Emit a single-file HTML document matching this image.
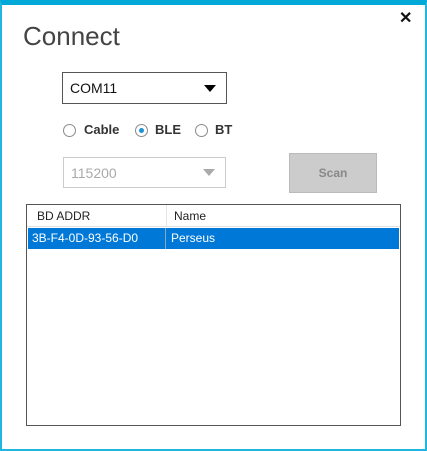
<!DOCTYPE html>
<html><head><style>
*{margin:0;padding:0;box-sizing:border-box}
body{width:427px;height:451px;background:#fff;font-family:"Liberation Sans",sans-serif;position:relative;overflow:hidden}
.frame{position:absolute;left:0;top:0;width:427px;height:451px;border:2px solid #1fb6e0;border-top:5px solid #00a9d8}
.abs{position:absolute}
.radio{position:absolute;width:13px;height:13px;border:1px solid #8a8a8a;border-radius:50%;background:#fff}
.lbl{position:absolute;font-size:13px;font-weight:bold;color:#333;top:122px}
</style></head><body>
<div class="frame"></div>
<div class="abs" style="left:399px;top:8px;font-size:16px;font-weight:bold;color:#111">✕</div>
<div class="abs" style="left:23px;top:21px;font-size:26px;color:#444">Connect</div>
<div class="abs" style="left:62px;top:72px;width:165px;height:32px;border:1px solid #555;font-size:14px;padding:7px 0 0 7px;color:#111">COM11</div>
<div class="abs" style="left:204px;top:85px;width:0;height:0;border-left:6px solid transparent;border-right:6px solid transparent;border-top:7px solid #000"></div>
<div class="radio" style="left:63px;top:124px"></div>
<div class="lbl" style="left:84px">Cable</div>
<div class="radio" style="left:135px;top:124px"><div style="position:absolute;left:3px;top:3px;width:5px;height:5px;border-radius:50%;background:#1e90d6"></div></div>
<div class="lbl" style="left:155px">BLE</div>
<div class="radio" style="left:195px;top:124px"></div>
<div class="lbl" style="left:215px">BT</div>
<div class="abs" style="left:63px;top:157px;width:163px;height:31px;border:1px solid #ccc;font-size:14px;padding:7px 0 0 7px;color:#aaa">115200</div>
<div class="abs" style="left:203px;top:169px;width:0;height:0;border-left:6px solid transparent;border-right:6px solid transparent;border-top:7px solid #aaa"></div>
<div class="abs" style="left:289px;top:153px;width:88px;height:40px;background:#ccc;border:1px solid #bbb;font-size:12px;font-weight:bold;color:#888;text-align:center;line-height:38px">Scan</div>
<div class="abs" style="left:26px;top:204px;width:375px;height:222px;border:1px solid #555">
 <div class="abs" style="left:0;top:0;width:373px;height:22px;border-bottom:1px solid #e0e0e0;font-size:12px;color:#222">
  <span class="abs" style="left:10px;top:4px">BD ADDR</span>
  <span class="abs" style="left:139px;top:0;width:1px;height:22px;background:#e5e5e5"></span>
  <span class="abs" style="left:147px;top:4px">Name</span>
 </div>
 <div class="abs" style="left:1px;top:23px;width:371px;height:21px;background:#0078d7;font-size:12px;color:#fff">
  <span class="abs" style="left:4px;top:3px">3B-F4-0D-93-56-D0</span>
  <span class="abs" style="left:137px;top:0;width:1px;height:21px;background:#8ab"></span>
  <span class="abs" style="left:143px;top:3px">Perseus</span>
 </div>
</div>
</body></html>
